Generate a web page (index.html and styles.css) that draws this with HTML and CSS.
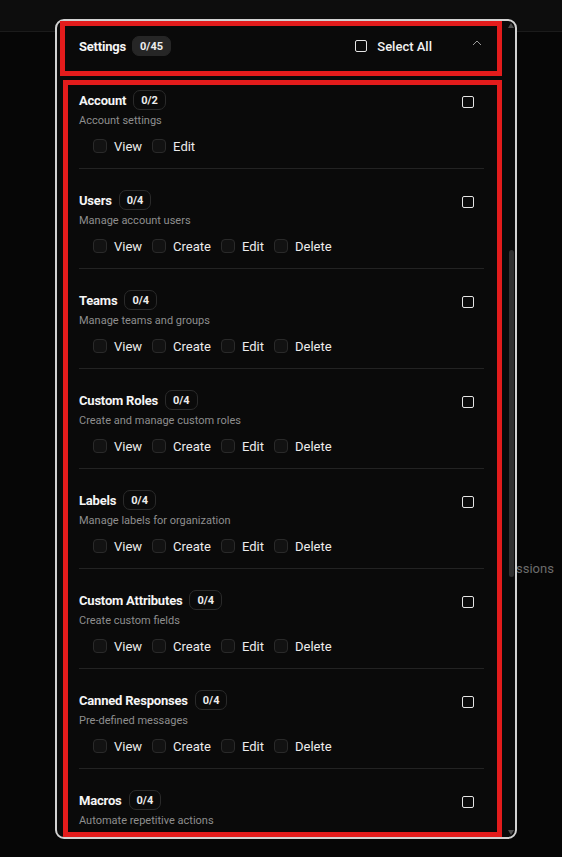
FILE: index.html
```html
<!DOCTYPE html>
<html lang="en">
<head>
<meta charset="utf-8">
<title>Permissions</title>
<link rel="stylesheet" href="styles.css">
</head>
<body>
<div class="topbar"></div>
<div class="bg-text">Permissions</div>

<div class="modal">
  <div class="main">
    <div class="head">
      <div class="head-left">
        <span class="head-title">Settings</span>
        <span class="badge badge-fill">0/45</span>
      </div>
      <div class="head-right">
        <span class="cb-native"></span>
        <span class="select-all">Select All</span>
        <svg class="chevron" width="10" height="6" viewBox="0 0 10 6"><polyline points="1,5 5,1 9,5" fill="none" stroke="#9a9a9a" stroke-width="1"/></svg>
      </div>
    </div>

    <div class="list">
      <div class="section">
        <div class="sec-top">
          <div class="sec-name"><span class="sec-title">Account</span><span class="badge">0/2</span></div>
          <span class="cb-native cb-right"></span>
        </div>
        <div class="sec-desc">Account settings</div>
        <div class="perms">
          <span class="perm"><span class="cb"></span>View</span>
          <span class="perm"><span class="cb"></span>Edit</span>
        </div>
      </div>

      <div class="section">
        <div class="sec-top">
          <div class="sec-name"><span class="sec-title">Users</span><span class="badge">0/4</span></div>
          <span class="cb-native cb-right"></span>
        </div>
        <div class="sec-desc">Manage account users</div>
        <div class="perms">
          <span class="perm"><span class="cb"></span>View</span>
          <span class="perm"><span class="cb"></span>Create</span>
          <span class="perm"><span class="cb"></span>Edit</span>
          <span class="perm"><span class="cb"></span>Delete</span>
        </div>
      </div>

      <div class="section">
        <div class="sec-top">
          <div class="sec-name"><span class="sec-title">Teams</span><span class="badge">0/4</span></div>
          <span class="cb-native cb-right"></span>
        </div>
        <div class="sec-desc">Manage teams and groups</div>
        <div class="perms">
          <span class="perm"><span class="cb"></span>View</span>
          <span class="perm"><span class="cb"></span>Create</span>
          <span class="perm"><span class="cb"></span>Edit</span>
          <span class="perm"><span class="cb"></span>Delete</span>
        </div>
      </div>

      <div class="section">
        <div class="sec-top">
          <div class="sec-name"><span class="sec-title">Custom Roles</span><span class="badge">0/4</span></div>
          <span class="cb-native cb-right"></span>
        </div>
        <div class="sec-desc">Create and manage custom roles</div>
        <div class="perms">
          <span class="perm"><span class="cb"></span>View</span>
          <span class="perm"><span class="cb"></span>Create</span>
          <span class="perm"><span class="cb"></span>Edit</span>
          <span class="perm"><span class="cb"></span>Delete</span>
        </div>
      </div>

      <div class="section">
        <div class="sec-top">
          <div class="sec-name"><span class="sec-title">Labels</span><span class="badge">0/4</span></div>
          <span class="cb-native cb-right"></span>
        </div>
        <div class="sec-desc">Manage labels for organization</div>
        <div class="perms">
          <span class="perm"><span class="cb"></span>View</span>
          <span class="perm"><span class="cb"></span>Create</span>
          <span class="perm"><span class="cb"></span>Edit</span>
          <span class="perm"><span class="cb"></span>Delete</span>
        </div>
      </div>

      <div class="section">
        <div class="sec-top">
          <div class="sec-name"><span class="sec-title">Custom Attributes</span><span class="badge">0/4</span></div>
          <span class="cb-native cb-right"></span>
        </div>
        <div class="sec-desc">Create custom fields</div>
        <div class="perms">
          <span class="perm"><span class="cb"></span>View</span>
          <span class="perm"><span class="cb"></span>Create</span>
          <span class="perm"><span class="cb"></span>Edit</span>
          <span class="perm"><span class="cb"></span>Delete</span>
        </div>
      </div>

      <div class="section">
        <div class="sec-top">
          <div class="sec-name"><span class="sec-title">Canned Responses</span><span class="badge">0/4</span></div>
          <span class="cb-native cb-right"></span>
        </div>
        <div class="sec-desc">Pre-defined messages</div>
        <div class="perms">
          <span class="perm"><span class="cb"></span>View</span>
          <span class="perm"><span class="cb"></span>Create</span>
          <span class="perm"><span class="cb"></span>Edit</span>
          <span class="perm"><span class="cb"></span>Delete</span>
        </div>
      </div>

      <div class="section section-last">
        <div class="sec-top">
          <div class="sec-name"><span class="sec-title">Macros</span><span class="badge">0/4</span></div>
          <span class="cb-native cb-right"></span>
        </div>
        <div class="sec-desc">Automate repetitive actions</div>
      </div>
    </div>
  </div>

  <div class="scrollbar">
    <span class="arrow-up"></span>
    <div class="track"><div class="thumb"></div></div>
    <span class="arrow-down"></span>
  </div>
</div>

<div class="mark mark-head"></div>
<div class="mark mark-list"></div>
</body>
</html>
```

FILE: styles.css
```css
html, body {
  margin: 0;
  padding: 0;
}

body {
  width: 562px;
  height: 857px;
  background: #060606;
  font-family: Roboto, "Noto Sans", "Liberation Sans", sans-serif;
  color: #f2f2f2;
  overflow: hidden;
  position: relative;
}

.topbar {
  height: 31px;
  background: #0d0d0d;
  border-bottom: 1px solid #1b1b1b;
}

.bg-text {
  position: absolute;
  left: 482px;
  top: 561px;
  font-size: 13px;
  color: #6c6c6c;
}

.modal {
  position: absolute;
  left: 55px;
  top: 19px;
  width: 462px;
  height: 820px;
  box-sizing: border-box;
  border: 2px solid #d2d2d2;
  border-radius: 9px;
  background: #0a0a0a;
  display: flex;
  overflow: hidden;
  z-index: 1;
}

.main {
  flex: 1;
  min-width: 0;
  display: flex;
  flex-direction: column;
}

/* header */
.head {
  height: 57px;
  box-sizing: border-box;
  padding: 15px 25px 0 22px;
  display: flex;
  align-items: flex-start;
  justify-content: space-between;
  flex-shrink: 0;
}

.head-left {
  display: flex;
  align-items: center;
  gap: 6px;
  height: 20px;
}

.head-title {
  font-size: 13px;
  font-weight: 700;
  color: #f5f5f5;
  letter-spacing: -0.2px;
}

.head-right {
  display: flex;
  align-items: center;
  height: 20px;
}

.select-all {
  margin-left: 10px;
  font-size: 13px;
  font-weight: 500;
  color: #f2f2f2;
}

.chevron {
  margin-left: 40px;
  margin-top: -6px;
}

/* badges */
.badge {
  display: inline-flex;
  align-items: center;
  height: 20px;
  box-sizing: border-box;
  padding: 0 7px;
  border: 1px solid #2a2a2a;
  border-radius: 7px;
  font-size: 11px;
  font-weight: 700;
  color: #ededed;
}

.badge-fill {
  background: #262626;
  border-color: #262626;
}

/* checkboxes */
.cb-native {
  width: 12px;
  height: 12px;
  box-sizing: border-box;
  border: 1.5px solid #e4e4e4;
  border-radius: 2px;
  flex-shrink: 0;
}

.cb {
  width: 14px;
  height: 14px;
  box-sizing: border-box;
  border: 1px solid #2a2a2a;
  border-radius: 4px;
  background: #121212;
  margin-right: 7px;
  flex-shrink: 0;
}

/* list */
.list {
  padding: 12px 23px 0 22px;
  display: flex;
  flex-direction: column;
  gap: 21px;
}

.section {
  padding-bottom: 14px;
  border-bottom: 1px solid #232323;
  flex-shrink: 0;
}

.section-last {
  border-bottom: 0;
}

.sec-top {
  height: 20px;
  display: flex;
  align-items: center;
  justify-content: space-between;
}

.sec-name {
  display: flex;
  align-items: center;
  gap: 7px;
}

.sec-title {
  font-size: 13px;
  font-weight: 700;
  color: #f5f5f5;
  letter-spacing: -0.2px;
}

.cb-right {
  margin-right: 10px;
  margin-top: 4px;
}

.sec-desc {
  margin-top: 3px;
  height: 16px;
  line-height: 16px;
  font-size: 11px;
  color: #8e8e8e;
}

.perms {
  margin-top: 9px;
  height: 16px;
  padding-left: 14px;
  display: flex;
  align-items: center;
  gap: 10px;
}

.perm {
  display: inline-flex;
  align-items: center;
  font-size: 13px;
  color: #ececec;
}

/* scrollbar */
.scrollbar {
  width: 8px;
  display: flex;
  flex-direction: column;
  align-items: center;
  padding: 2px 0 2px;
  box-sizing: border-box;
}

.arrow-up {
  width: 0;
  height: 0;
  border-left: 3.5px solid transparent;
  border-right: 3.5px solid transparent;
  border-bottom: 5px solid #4e4e4e;
}

.arrow-down {
  width: 0;
  height: 0;
  border-left: 3.5px solid transparent;
  border-right: 3.5px solid transparent;
  border-top: 5px solid #4e4e4e;
}

.track {
  flex: 1;
  width: 100%;
  padding-top: 222px;
  box-sizing: border-box;
  display: flex;
  justify-content: center;
}

.thumb {
  width: 5px;
  height: 327px;
  background: #303030;
  border-radius: 3px;
}

/* annotation boxes */
.mark {
  position: absolute;
  box-sizing: border-box;
  border: 5px solid #e31c1c;
  z-index: 2;
  pointer-events: none;
}

.mark-head {
  left: 60px;
  top: 21px;
  width: 442px;
  height: 55px;
}

.mark-list {
  left: 63px;
  top: 80px;
  width: 439px;
  height: 757px;
}
```
